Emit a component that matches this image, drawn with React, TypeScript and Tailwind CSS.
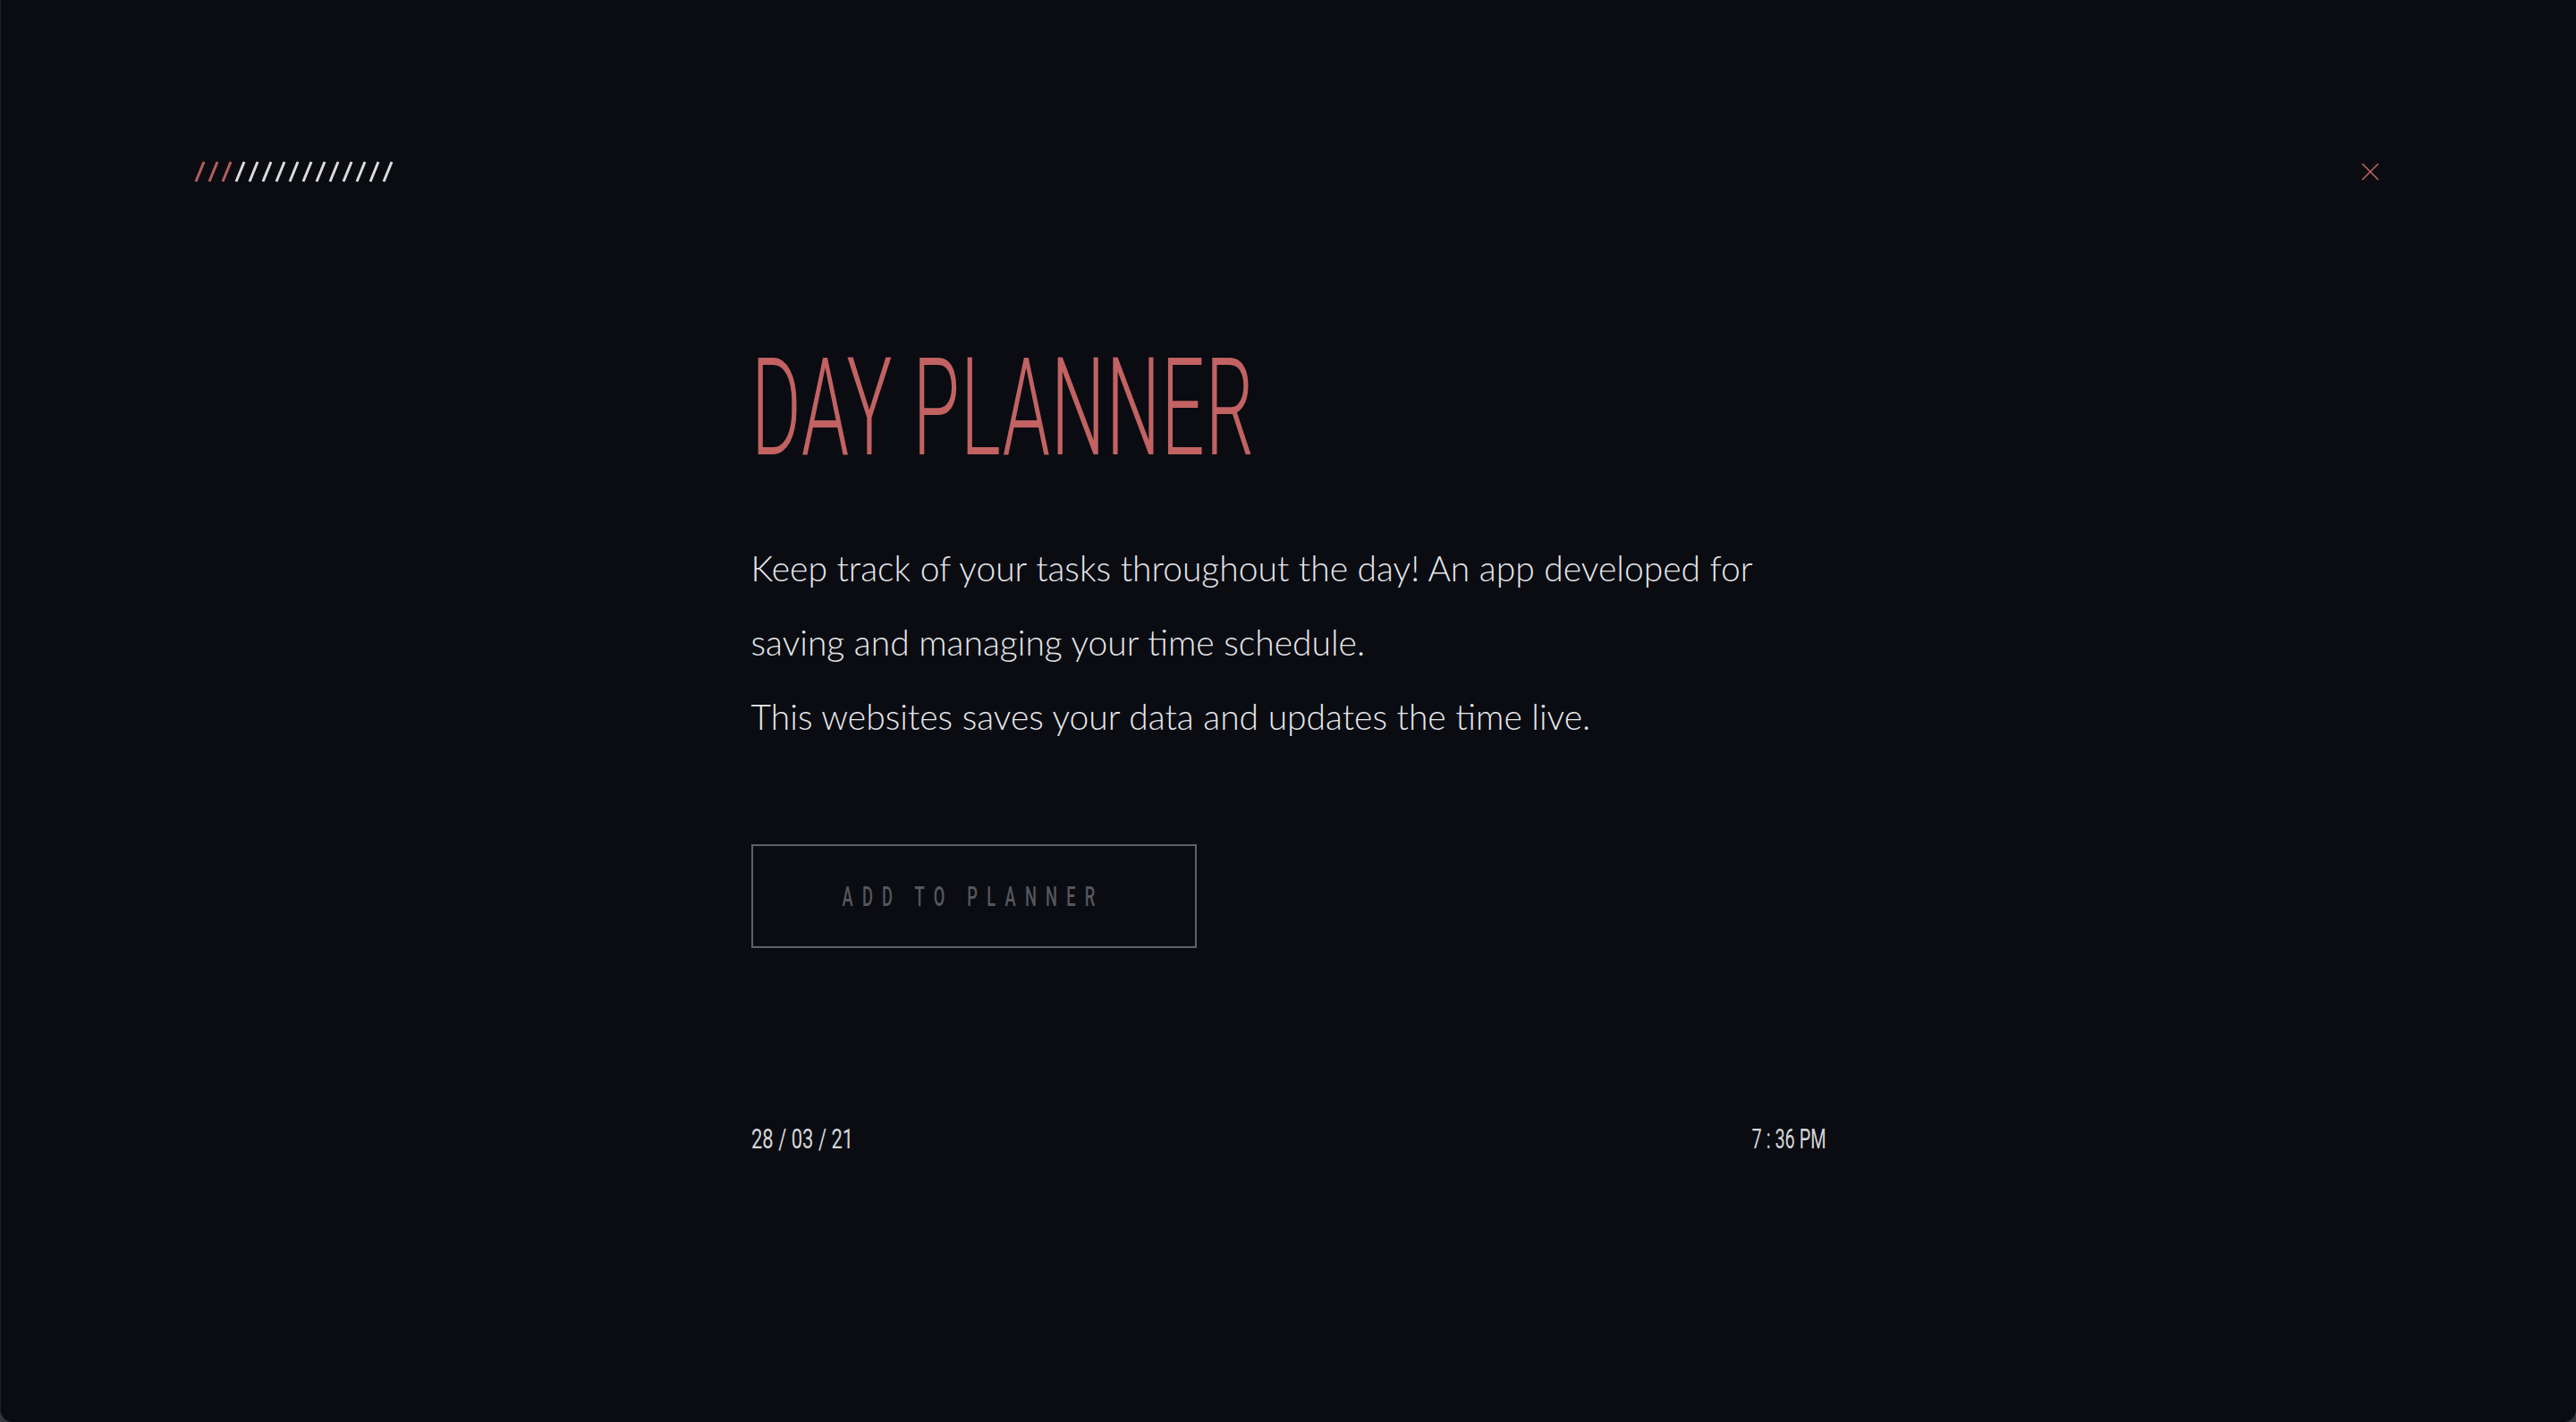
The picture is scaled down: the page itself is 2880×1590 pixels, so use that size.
import { useEffect, useState } from 'react';

const RED = '#c26262';

function Slashes() {
  // 15 slashes, the first three in red
  const items = Array.from({ length: 15 }, (_, i) => i);
  return (
    <svg width="226" height="24" viewBox="0 0 226 24" aria-hidden="true">
      {items.map(i => (
        <line
          key={i}
          x1={2 + i * 15}
          y1={23}
          x2={11 + i * 15}
          y2={1}
          stroke={i < 3 ? '#b15f5f' : '#dcdcdc'}
          strokeWidth={3}
          strokeLinecap="butt"
        />
      ))}
    </svg>
  );
}

function CloseIcon() {
  return (
    <svg width="20" height="20" viewBox="0 0 20 20" aria-hidden="true">
      <line x1="1" y1="1" x2="19" y2="19" stroke={RED} strokeWidth="1.6" />
      <line x1="19" y1="1" x2="1" y2="19" stroke={RED} strokeWidth="1.6" />
    </svg>
  );
}

export default function App() {
  const [now] = useState({ date: '28 / 03 / 21', time: '7 : 36 PM' });

  useEffect(() => {
    document.body.style.background = '#34363a';
  }, []);

  return (
    <div className="w-[2880px] h-[1590px] bg-[#34363a]">
      <div className="h-full bg-[#0a0c12] rounded-b-[14px] border-l border-[#1f2128] flex flex-col">
        <header className="flex items-center justify-between pl-[216px] pr-[220px] pt-[180px]">
          <Slashes />
          <button className="flex items-center justify-center">
            <CloseIcon />
          </button>
        </header>

        <main className="w-[1202px] mx-auto mt-[176px] flex flex-col">
          <h1
            className="inline-block origin-left scale-x-[0.56] whitespace-nowrap text-[152px] leading-none font-light tracking-[2px]"
            style={{ color: RED, fontFamily: 'Roboto, sans-serif' }}
          >
            DAY PLANNER
          </h1>

          <div
            className="mt-[62px] text-[39px] leading-[83px] font-light text-[#e8e8ea]"
            style={{ fontFamily: 'Lato, sans-serif' }}
          >
            <p className="whitespace-nowrap">
              Keep track of your tasks throughout the day! An app developed for
            </p>
            <p className="whitespace-nowrap">saving and managing your time schedule.</p>
            <p className="whitespace-nowrap">This websites saves your data and updates the time live.</p>
          </div>

          <button className="mt-[101px] w-[498px] h-[116px] border-2 border-[#5f6166] flex items-center justify-center">
            <span
              className="inline-block scale-x-[0.57] whitespace-nowrap text-[32px] leading-none font-medium tracking-[18px] text-[#55575d]"
              style={{ fontFamily: 'Roboto, sans-serif' }}
            >
              ADD TO PLANNER
            </span>
          </button>

          <div
            className="mt-[198px] flex items-start justify-between text-[31px] leading-none text-[#d6d6d8]"
            style={{ fontFamily: 'Roboto, sans-serif' }}
          >
            <span className="inline-block origin-left scale-x-[0.71] whitespace-nowrap">{now.date}</span>
            <span className="inline-block origin-right scale-x-[0.64] whitespace-nowrap">{now.time}</span>
          </div>
        </main>
      </div>
    </div>
  );
}
